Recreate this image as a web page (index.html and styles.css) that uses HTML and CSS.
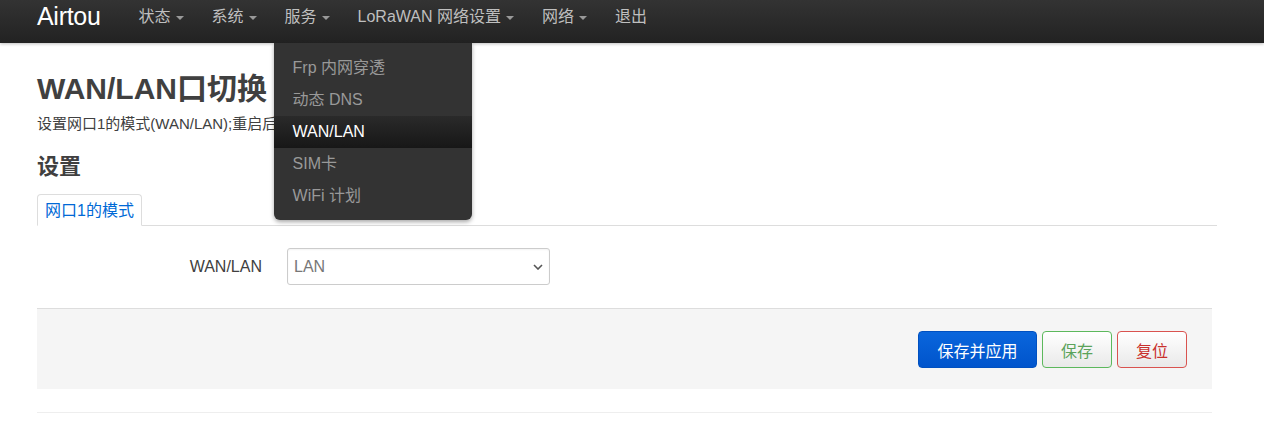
FILE: index.html
```html
<!DOCTYPE html>
<html>
<head>
    <meta charset="utf-8">
    <link rel="stylesheet" href="styles.css">
</head>
<body>
    <div class="navbar">
        <a class="brand" href="#">Airtou</a>
        <ul class="nav">
            <li><a href="#">状态<span class="caret"></span></a></li>
            <li><a href="#">系统<span class="caret"></span></a></li>
            <li class="open">
                <a href="#">服务<span class="caret"></span></a>
                <ul class="dropdown-menu">
                    <li><a href="#">Frp 内网穿透</a></li>
                    <li><a href="#">动态 DNS</a></li>
                    <li class="active"><a href="#">WAN/LAN</a></li>
                    <li><a href="#">SIM卡</a></li>
                    <li><a href="#">WiFi 计划</a></li>
                </ul>
            </li>
            <li><a href="#">LoRaWAN 网络设置<span class="caret"></span></a></li>
            <li><a href="#">网络<span class="caret"></span></a></li>
            <li><a href="#">退出</a></li>
        </ul>
    </div>

    <div class="container">
        <h2 class="page-title">WAN/LAN口切换</h2>
        <div class="page-desc">设置网口1的模式(WAN/LAN);重启后生效</div>

        <h3 class="section-title">设置</h3>
        <ul class="tabs">
            <li class="tab active">网口1的模式</li>
        </ul>

        <div class="form-row">
            <label class="form-label">WAN/LAN</label>
            <div class="select">
                <span>LAN</span>
                <svg class="chevron" width="10" height="6" viewBox="0 0 10 6">
                    <path d="M1 1 L5 5 L9 1" fill="none" stroke="#555" stroke-width="1.6"/>
                </svg>
            </div>
        </div>

        <div class="actions">
            <button class="btn btn-primary">保存并应用</button>
            <button class="btn btn-save">保存</button>
            <button class="btn btn-reset">复位</button>
        </div>

        <div class="footer-line"></div>
    </div>
</body>
</html>
```

FILE: styles.css
```css
body {
    margin: 0;
    font-family: "Liberation Sans", "Noto Sans CJK SC", sans-serif;
    font-size: 14px;
    color: #404040;
    background: #fff;
}
a {
    text-decoration: none;
}
ul {
    list-style: none;
    margin: 0;
    padding: 0;
}

/* top bar */
.navbar {
    height: 43px;
    box-sizing: border-box;
    display: flex;
    align-items: flex-start;
    padding-left: 37px;
    background: linear-gradient(#333, #222);
    box-shadow: 0 1px 3px rgba(0,0,0,0.25);
}
.brand {
    color: #fff;
    font-size: 25px;
    line-height: 33px;
    letter-spacing: -0.3px;
    margin-right: 25px;
}
.nav {
    display: flex;
}
.nav > li {
    position: relative;
}
.nav > li > a {
    display: block;
    color: #bfbfbf;
    font-size: 16px;
    line-height: 33px;
    padding: 0 14px 0 13px;
    margin-right: 1px;
}
.caret {
    display: inline-block;
    width: 0;
    height: 0;
    margin-left: 5px;
    vertical-align: middle;
    border-left: 4px solid transparent;
    border-right: 4px solid transparent;
    border-top: 4px solid #999;
}
.dropdown-menu {
    position: absolute;
    top: 43px;
    left: 2px;
    width: 198px;
    padding: 9px 0 8px;
    background: #333;
    border-radius: 0 0 6px 6px;
    box-shadow: 0 2px 4px rgba(0,0,0,0.35);
    z-index: 10;
}
.dropdown-menu a {
    display: block;
    height: 32px;
    line-height: 32px;
    padding-left: 19px;
    color: #999;
    font-size: 16px;
}
.dropdown-menu .active a {
    color: #fff;
    background: linear-gradient(#2a2a2a, #171717);
}

/* content */
.container {
    padding: 0 47px 0 37px;
}
.page-title {
    margin: 27px 0 0;
    font-size: 30px;
    line-height: 38px;
    font-weight: bold;
    color: #404040;
}
.page-desc {
    margin-top: 6px;
    font-size: 15px;
    line-height: 20px;
    color: #404040;
}
.section-title {
    margin: 19px 0 0;
    font-size: 22px;
    line-height: 27px;
    font-weight: bold;
    color: #404040;
}
.tabs {
    margin-top: 14px;
    display: flex;
    border-bottom: 1px solid #ddd;
}
.tab {
    height: 30px;
    line-height: 31px;
    padding: 0 7px;
    margin-bottom: -1px;
    font-size: 16px;
    color: #0069d6;
    border: 1px solid #ddd;
    border-bottom-color: #fff;
    border-radius: 4px 4px 0 0;
    background: #fff;
}

.form-row {
    display: flex;
    align-items: center;
    margin-top: 22px;
}
.form-label {
    width: 225px;
    text-align: right;
    margin-right: 25px;
    font-size: 16px;
    color: #404040;
}
.select {
    width: 263px;
    height: 37px;
    box-sizing: border-box;
    display: flex;
    align-items: center;
    justify-content: space-between;
    padding: 0 6px;
    border: 1px solid #ccc;
    border-radius: 3px;
    color: #777;
    font-size: 16px;
    box-shadow: inset 0 1px 2px rgba(0,0,0,0.05);
}

.actions {
    margin: 23px 5px 0 0;
    display: flex;
    justify-content: flex-end;
    gap: 5px;
    padding: 22px 25px 21px;
    background: #f5f5f5;
    border-top: 1px solid #ddd;
}
.btn {
    height: 37px;
    padding: 0;
    font-family: inherit;
    font-size: 16px;
    border-radius: 4px;
    cursor: pointer;
    background: linear-gradient(#fff, #e9e9e9);
}
.btn-primary {
    width: 119px;
    color: #fff;
    border: 1px solid #0050c0;
    background: linear-gradient(#0a66dc, #0054cc);
}
.btn-save {
    width: 70px;
    color: #5ba35b;
    border: 1px solid #5cb85c;
}
.btn-reset {
    width: 70px;
    color: #c9302c;
    border: 1px solid #d9534f;
}
.footer-line {
    margin: 23px 5px 0 0;
    border-top: 1px solid #eee;
}
```
